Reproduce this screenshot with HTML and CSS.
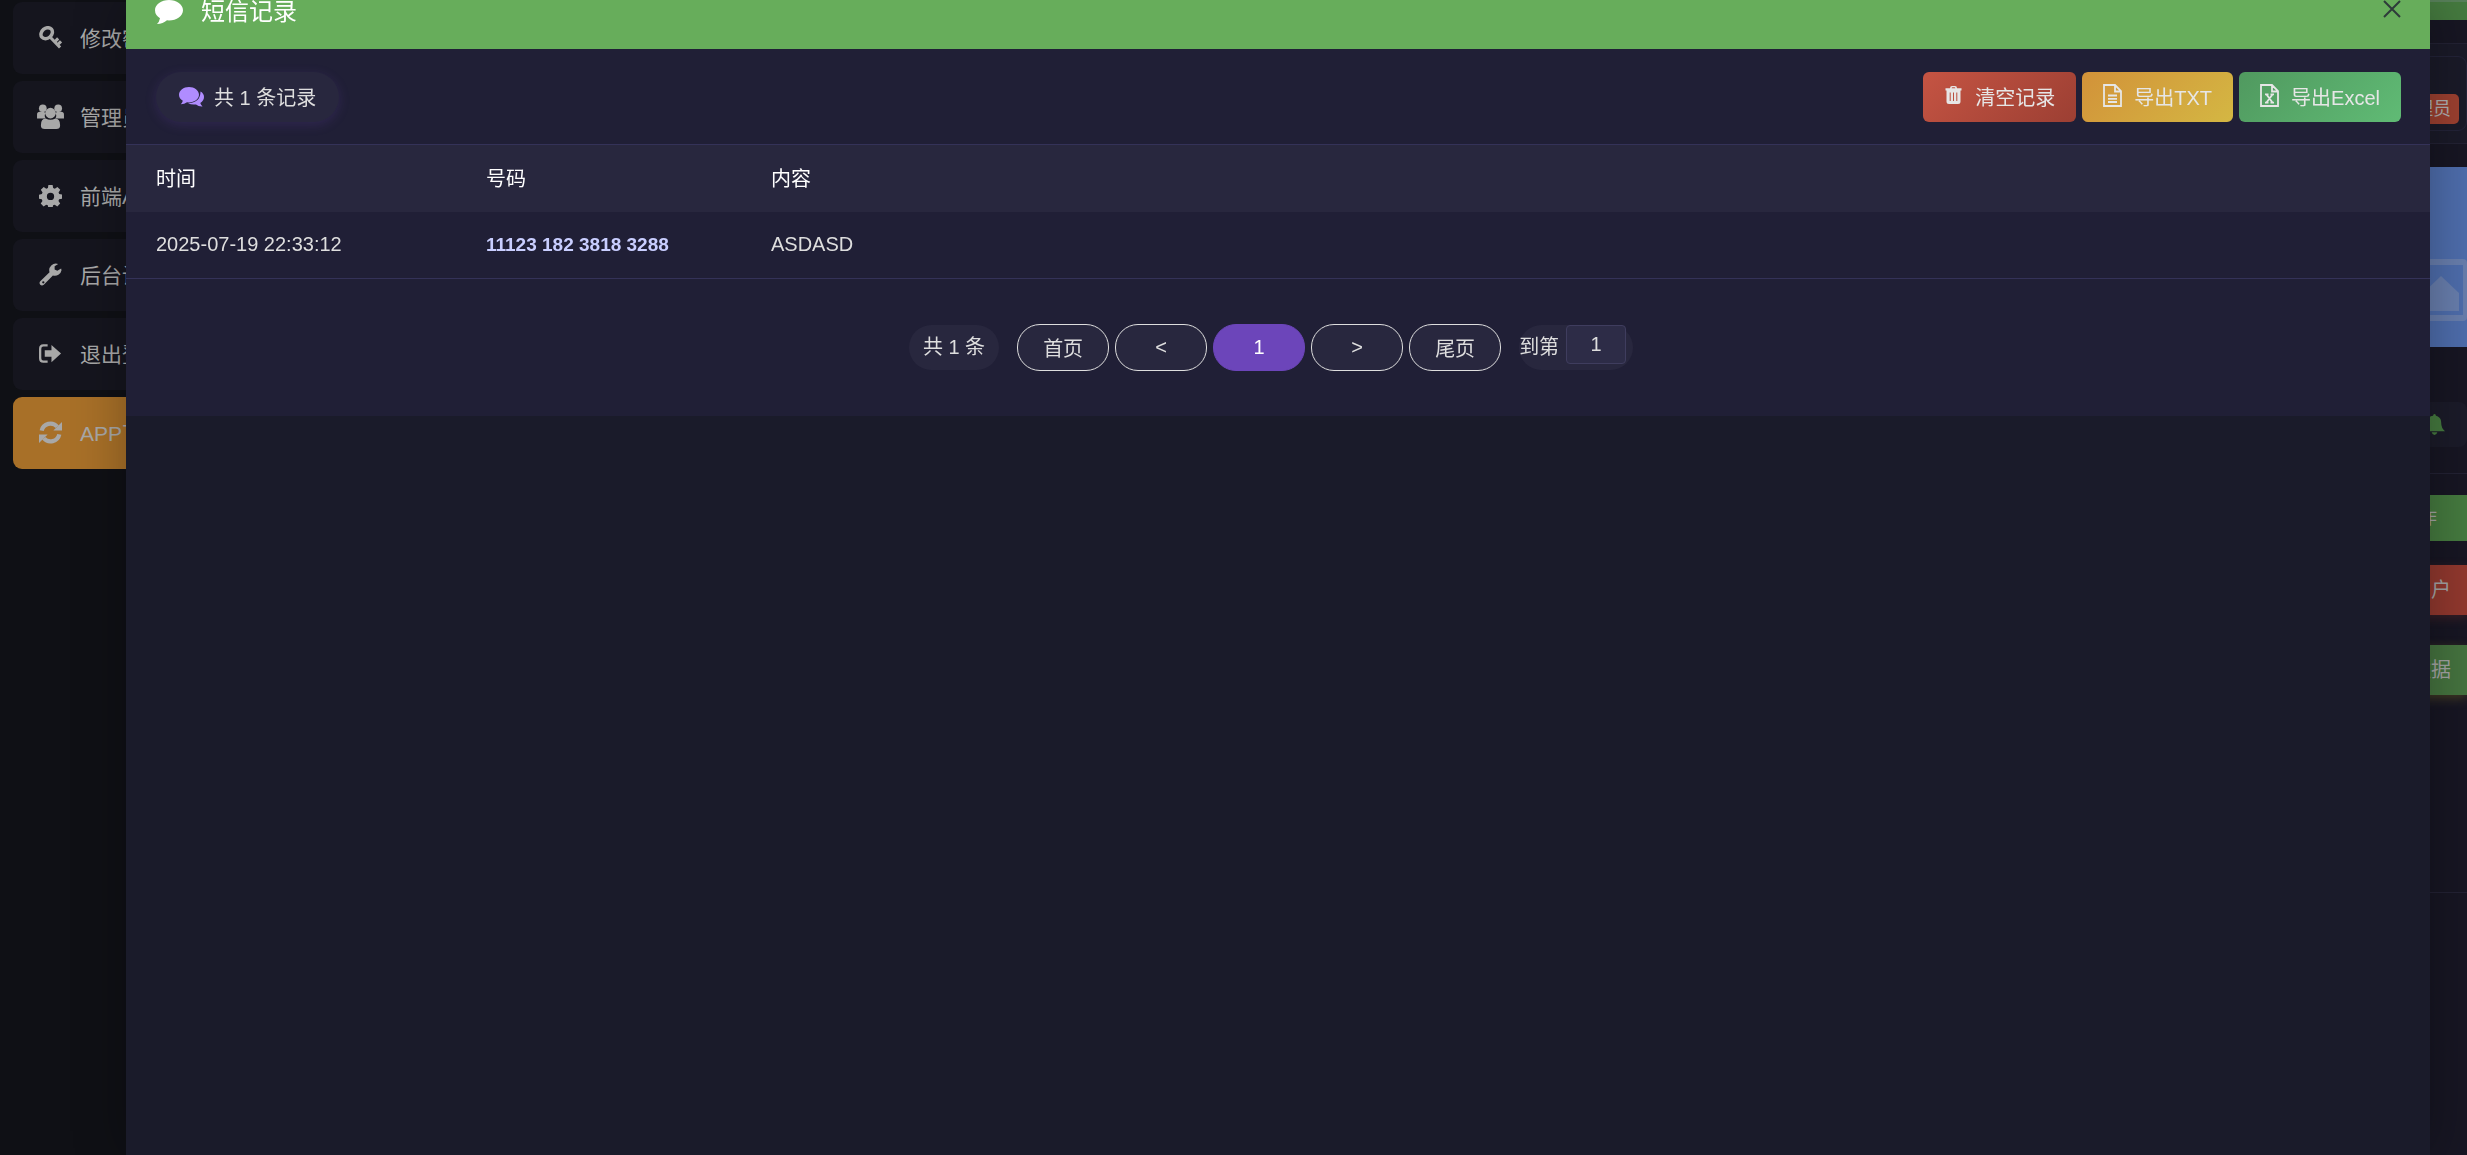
FILE: index.html
```
<!DOCTYPE html>
<html lang="zh-CN">
<head>
<meta charset="utf-8">
<title>短信记录</title>
	<link rel="stylesheet" href="styles.css">
</head>

<body>
<div class="page">

<nav class="sidebar">
	<a href="#" class="nav-item">
		<svg class="icon" viewBox="0 0 24 24"><g fill="none" stroke="currentColor"><ellipse cx="8" cy="7.500" rx="6.500" ry="5.200" transform="rotate(-40 8 7.500)" stroke-width="3.600"/><path d="M11.500 11.500l10.500 11M16.500 16.500l3.500-3.500M19.500 19.500l3.500-3.500" stroke-width="3.200"/></g></svg>
		<span>修改密码</span>
	</a>
	<a href="#" class="nav-item">
		<svg class="icon icon-wide" viewBox="0 0 28 26"><circle cx="6" cy="4.500" r="4"/><circle cx="22" cy="4.500" r="4"/><path d="M0 15V11q0-3 3-3h4q1 1 2 1-2 3 0 6zM28 15V11q0-3-3-3h-4q-1 1-2 1 2 3 0 6z"/><circle cx="14" cy="9.500" r="5.500"/><path d="M4 22q0-7 5-7 5 3 10 0 5 0 5 7 0 4-4 4H8q-4 0-4-4z"/></svg>
		<span>管理员</span>
	</a>
	<a href="#" class="nav-item">
		<svg class="icon" viewBox="0 0 24 24"><path fill-rule="evenodd" d="M9.800 1h4.400l.6 3.200 1.700.7 2.700-1.800 3 3-1.800 2.700.7 1.700 3 .6v4.300l-3.100.6-.7 1.700 1.800 2.700-3 3-2.700-1.800-1.700.7-.6 3.100H9.800l-.6-3.100-1.700-.7-2.700 1.800-3-3 1.800-2.700-.7-1.700L0 15.400v-4.300l3-.6.700-1.700L1.900 6.100l3-3 2.700 1.800 1.700-.7zM12 9.200a3.800 3.800 0 1 0 0 7.600 3.800 3.800 0 0 0 0-7.600z"/></svg>
		<span>前端API</span>
	</a>
	<a href="#" class="nav-item">
		<svg class="icon" viewBox="0 0 24 24"><path fill-rule="evenodd" d="M23.500 7.500A7 7 0 0 1 14.500 13L5 22.700q-2 1.500-3.700-.1-1.500-1.700 0-3.500L11 9.700A7 7 0 0 1 20 1l-3.700 2.500v3.200l2.800 1.500 4-2.400zM4.500 19a1.200 1.200 0 1 0 0 2.400 1.200 1.200 0 0 0 0-2.400z"/></svg>
		<span>后台设置</span>
	</a>
	<a href="#" class="nav-item">
		<svg class="icon" viewBox="0 0 24 24"><path d="M9 3.500H4.500Q1.200 3.500 1.200 7v10q0 3.500 3.300 3.500H9" fill="none" stroke="currentColor" stroke-width="2.400"/><path d="M6 8.500h7V3l10 9-10 9v-5.500H6z"/></svg>
		<span>退出登录</span>
	</a>
	<a href="#" class="nav-item nav-app">
		<svg class="icon" viewBox="0 0 24 24"><g fill="none" stroke="currentColor" stroke-width="4.400"><path d="M2.800 10A9.300 9.300 0 0 1 19 6"/><path d="M21.200 14A9.300 9.300 0 0 1 5 18"/></g><path d="M24 1v9h-9zM0 23v-9h9z"/></svg>
		<span>APP下载</span>
	</a>
</nav>

<main class="main">
	<div class="topbar"></div>
	<section class="user-card">
		<div class="user-box"><span class="role">管理员</span></div>
	</section>
	<section class="banner">
		<svg class="banner-icon" viewBox="0 0 62 62"><path fill-rule="evenodd" d="M4 0h54q4 0 4 4v54q0 4-4 4H4q-4 0-4-4V4q0-4 4-4zM5 6v50h53V6z"/><path d="M18 52V34l18-17 18 17v18z"/></svg>
	</section>
	<section class="notice">
		<svg class="bell" viewBox="0 0 22 22"><path d="M11 0q1.500 0 1.500 1.800C17 3 18 6 18 9q0 6 4 9H0q4-3 4-9 0-3 1-5 2-2 4.500-2.200Q9.500 0 11 0zM8 19h6q-1 3-3 3t-3-3z"/></svg>
	</section>
	<section class="actions">
		<div class="action action-head">操作</div>
		<button type="button" class="action action-red">清空用户</button>
		<button type="button" class="action action-green">导出数据</button>
	</section>
</main>

</div>

<div class="layer" role="dialog" aria-labelledby="layer-title">
	<header class="layer-head">
		<svg class="title-icon" viewBox="0 0 28 24"><path d="M14 0c7.700 0 14 4.500 14 10.200S21.700 20.400 14 20.400q-1 0-2-.1Q8 23.800 2 24q2.300-2 3-5.700Q0 15 0 10.200C0 4.500 6.300 0 14 0z"/></svg>
		<h1 id="layer-title">短信记录</h1>
		<button type="button" class="close" aria-label="关闭">
			<svg viewBox="0 0 18 18"><path d="M1 1l16 16M17 1l-16 16"/></svg>
		</button>
	</header>

	<div class="panel">
		<div class="toolbar">
			<div class="count">
				<svg class="count-icon" viewBox="0 0 25 20"><path d="M10 0c5.500 0 10 3.500 10 7.700s-4.500 7.700-10 7.700l-2-.2Q5.500 17 1.800 17.200q1.700-1.400 2-3.400Q0 11.500 0 7.700C0 3.500 4.500 0 10 0z"/><path d="M21.500 4.500q3.500 2 3.500 5.500t-3.700 6q.5 2 2.200 3.400-4 .2-6.500-2-4.500.6-8-1.200 12.500-.5 12.500-11.700z"/></svg>
				<span>共 1 条记录</span>
			</div>
			<div class="buttons">
				<button type="button" class="btn btn-clear">
					<svg class="btn-icon icon-trash" viewBox="0 0 17 18"><path fill-rule="evenodd" d="M5 2.200Q5 0 7 0h3q2 0 2 2.200h4.500v2.300h-1V15.500q0 2.500-2.500 2.500H4q-2.500 0-2.500-2.500V4.500h-1V2.200zm1.700 0h3.600q0-.9-.8-.9h-2q-.8 0-.8.900zM4.700 6.500v8.500h1V6.500zm3.300 0v8.500h1V6.500zm3.300 0v8.500h1V6.500z"/></svg>
					清空记录
				</button>
				<button type="button" class="btn btn-txt">
					<svg class="btn-icon" viewBox="0 0 19 23"><g fill="none" stroke="currentColor" stroke-width="1.800"><path d="M1 1h11l6 6v15H1zM12 1v6.500h6M5 11.500h9M5 14.800h9M5 18h9"/></g></svg>
					导出TXT
				</button>
				<button type="button" class="btn btn-excel">
					<svg class="btn-icon" viewBox="0 0 19 23"><g fill="none" stroke="currentColor" stroke-width="1.800"><path d="M1 1h11l6 6v15H1zM12 1v6.500h6M6.500 10.500l6 8M12.500 10.500l-6 8M5 10.300h3.500M10.500 10.300H14M5 18.700h3.500M10.500 18.700H14"/></g></svg>
					导出Excel
				</button>
			</div>
		</div>

		<table class="records">
			<thead>
				<tr><th class="col-time">时间</th><th class="col-phone">号码</th><th>内容</th></tr>
			</thead>
			<tbody>
				<tr><td>2025-07-19 22:33:12</td><td class="phone">11123 182 3818 3288</td><td>ASDASD</td></tr>
			</tbody>
		</table>

		<div class="pager">
			<span class="total">共 1 条</span>
			<div class="pages">
				<button type="button">首页</button>
				<button type="button">&lt;</button>
				<button type="button" class="current">1</button>
				<button type="button">&gt;</button>
				<button type="button">尾页</button>
			</div>
			<div class="skip">
				<label for="goto">到第</label>
				<input type="text" id="goto" value="1">
			</div>
		</div>
	</div>
</div>
</body>
</html>
```
FILE: styles.css
```
* {
	box-sizing: border-box;
}
body {
	margin: 0;
	height: 100vh;
	overflow: hidden;
	background-color: #171623;
	font-family: "Liberation Sans", "Noto Sans CJK SC", sans-serif;
	font-size: 20px;
	color: #dedede;
}
button, input {
	font-family: inherit;
	font-size: inherit;
	color: inherit;
}
button {
	cursor: pointer;
}
svg {
	fill: currentColor;
	flex: none;
}

/* page behind the layer */
.page {
	display: flex;
	height: 100vh;
}
.sidebar {
	display: flex;
	flex-direction: column;
	gap: 7px;
	width: 300px;
	padding: 2px 13px;
	background-color: #0f1015;
}
.nav-item {
	display: flex;
	align-items: center;
	gap: 17px;
	height: 72px;
	padding: 0 0 2px 25px;
	border-radius: 9px;
	background-color: #15151e;
	color: #a8a8a8;
	font-size: 21px;
	text-decoration: none;
	white-space: nowrap;
}
.icon {
	width: 23px;
	height: 23px;
	margin: 0 1px;
}
.icon-wide {
	width: 27px;
	height: 25px;
	margin: 0 -1px;
}
.nav-app {
	background-color: #a87028;
}
.main {
	flex: 1;
	display: flex;
	flex-direction: column;
}
.topbar {
	height: 20px;
	border-top: 2px solid #58805a;
	background-color: #457a3f;
}
.user-card {
	margin-top: 23px;
	padding: 12px 0;
	border: solid #232234;
	border-width: 1px 0;
	background-color: #1a1a28;
}
.user-box {
	display: flex;
	justify-content: flex-end;
	align-items: flex-end;
	height: 75px;
	padding: 0 7px 6px;
	border: 1px solid #232338;
	border-radius: 9px;
}
.role {
	padding: 0 8px;
	border-radius: 5px;
	background-color: #9c4030;
	color: #b0b0b0;
	font-size: 18px;
	line-height: 30px;
}
.banner {
	display: flex;
	justify-content: flex-end;
	align-items: center;
	height: 180px;
	margin-top: 23px;
	padding-top: 65px;
	background-color: #4e6dac;
}
.banner-icon {
	width: 62px;
	height: 62px;
	color: #687ead;
}
.notice {
	display: flex;
	justify-content: flex-end;
	align-items: center;
	height: 45px;
	margin-top: 55px;
	padding-right: 22px;
	border-radius: 8px;
	background-color: #1b1b29;
}
.bell {
	width: 21px;
	height: 21px;
	color: #457a3f;
}
.actions {
	display: flex;
	flex-direction: column;
	height: 420px;
	margin-top: 26px;
	padding-top: 21px;
	border: solid #232234;
	border-width: 1px 0;
}
.action {
	height: 50px;
	margin-bottom: 30px;
	padding: 0 16px;
	border: 0;
	color: #a4a4a4;
	text-align: right;
	line-height: 50px;
}
.action-head {
	height: 46px;
	margin-bottom: 24px;
	padding-right: 30px;
	background-color: #457a3f;
	font-size: 18px;
	line-height: 46px;
}
.action-red {
	background-color: #91382e;
	box-shadow: 0 3px 10px rgba(145, 56, 46, 0.3);
}
.action-green {
	background-color: #45733f;
	box-shadow: 0 3px 10px rgba(140, 120, 40, 0.4);
}

/* layer */
.layer {
	position: fixed;
	top: 0;
	right: 37px;
	bottom: 0;
	left: 126px;
	background-color: #1a1b2a;
	box-shadow: 1px 1px 50px rgba(0, 0, 0, 0.3);
}
.layer-head {
	display: flex;
	align-items: flex-start;
	height: 49px;
	padding: 0 29px 0 19px;
	background-color: #67ad5b;
	color: #fff;
}
.title-icon {
	width: 28px;
	height: 24px;
	margin: 0 18px 0 10px;
}
.layer-head h1 {
	margin: 0;
	font-size: 24px;
	font-weight: normal;
	line-height: 24px;
}
.close {
	margin-left: auto;
	padding: 0;
	border: 0;
	background: none;
}
.close svg {
	display: block;
	width: 18px;
	height: 18px;
	fill: none;
	stroke: #2e3b3a;
	stroke-width: 2;
}
.panel {
	background-color: #201f36;
}
.toolbar {
	display: flex;
	justify-content: space-between;
	align-items: center;
	height: 95px;
	padding: 0 29px 0 30px;
}
.count {
	display: flex;
	align-items: center;
	gap: 10px;
	height: 50px;
	padding: 0 23px;
	border-radius: 25px;
	background-color: #28273e;
	box-shadow: 0 3px 12px rgba(108, 69, 186, 0.2);
}
.count-icon {
	width: 25px;
	height: 20px;
	color: #b08cff;
}
.buttons {
	display: flex;
	gap: 6px;
}
.btn {
	display: flex;
	align-items: center;
	gap: 12px;
	height: 50px;
	padding: 0 21px;
	border: 0;
	border-radius: 6px;
	color: #e6e6e6;
}
.btn-icon {
	width: 19px;
	height: 23px;
	margin-bottom: 3px;
}
.icon-trash {
	width: 19px;
	height: 18px;
}
.btn-clear {
	background: linear-gradient(135deg, #c55443, #9c3f33);
}
.btn-txt {
	background: linear-gradient(135deg, #d29239, #d4b743);
}
.btn-excel {
	background: linear-gradient(135deg, #50995f, #60bb75);
}

.records {
	width: 100%;
	border-collapse: collapse;
	table-layout: fixed;
}
.records th, .records td {
	height: 67px;
	padding: 0 30px;
	text-align: left;
}
.records th {
	padding-bottom: 2px;
	border-top: 1px solid #343258;
	background-color: #28273e;
	color: #fff;
	font-weight: normal;
}
.records td {
	border-bottom: 1px solid #343258;
}
.records .col-time {
	width: 330px;
}
.records .col-phone {
	width: 285px;
}
.records .phone {
	color: #c9ceff;
	font-size: 19px;
	font-weight: bold;
}

.pager {
	display: flex;
	justify-content: center;
	align-items: center;
	gap: 18px;
	height: 137px;
	padding-right: 14px;
}
.total {
	padding: 0 14px;
	border-radius: 23px;
	background-color: #28273e;
	line-height: 45px;
}
.pages {
	display: flex;
	gap: 6px;
}
.pages button {
	width: 92px;
	height: 47px;
	padding: 0;
	border: 1px solid #dedede;
	border-radius: 23px;
	background-color: #28273e;
}
.pages .current {
	border-color: #6c45ba;
	background-color: #6c45ba;
	color: #fff;
}
.skip {
	display: flex;
	align-items: flex-start;
	gap: 7px;
	height: 45px;
	padding-right: 7px;
	border-radius: 23px;
	background-color: #28273e;
	line-height: 45px;
}
.skip input {
	width: 60px;
	height: 39px;
	padding: 0;
	border: 1px solid #3f3d5e;
	border-radius: 4px;
	background-color: #2d2c47;
	text-align: center;
}
```
